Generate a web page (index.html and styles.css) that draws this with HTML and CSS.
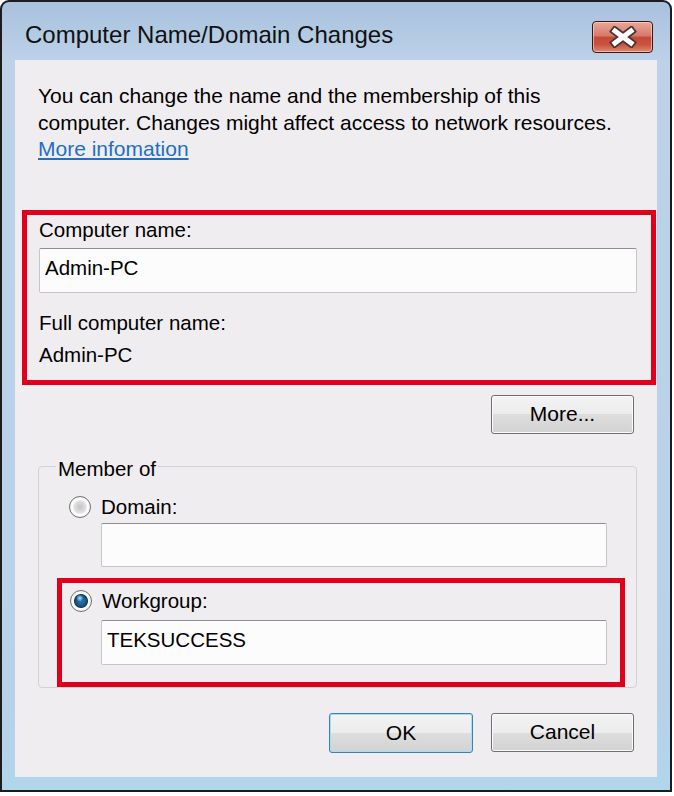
FILE: index.html
```html
<!DOCTYPE html>
<html lang="en">
<head>
    <meta charset="UTF-8">
    <meta name="viewport" content="width=device-width, initial-scale=1.0">
    <title>Computer Name/Domain Changes</title>
    <link rel="stylesheet" href="styles.css">
</head>
<body>
    <div class="window">
        <!-- title bar -->
        <div class="titlebar">
            <span class="title">Computer Name/Domain Changes</span>
            <button class="close" type="button" aria-label="Close">
                <svg width="28" height="22" viewBox="0 0 28 22">
                    <path d="M6 5 L22 17 M22 5 L6 17" stroke="#4b3434" stroke-width="8.5" stroke-linecap="square"/>
                    <path d="M6 5 L22 17 M22 5 L6 17" stroke="#ffffff" stroke-width="5" stroke-linecap="square"/>
                </svg>
            </button>
        </div>

        <div class="content">
            <p class="intro">
                You can change the name and the membership of this<br>
                computer. Changes might affect access to network resources.<br>
                <a href="#">More infomation</a>
            </p>

            <!-- computer name -->
            <div class="highlight name-box">
                <label class="label" for="computerName">Computer name:</label>
                <input class="textbox" id="computerName" type="text" value="Admin-PC">
                <div class="label full-label">Full computer name:</div>
                <div class="label full-value">Admin-PC</div>
            </div>

            <div class="more-row">
                <button class="btn" type="button">More...</button>
            </div>

            <!-- member of -->
            <fieldset class="group">
                <legend>Member of</legend>
                <label class="radio-row domain-row"><span class="radio"></span>Domain:</label>
                <input class="textbox domain-input" type="text">
                <div class="highlight workgroup-box">
                    <label class="radio-row"><span class="radio checked"></span>Workgroup:</label>
                    <input class="textbox workgroup-input" type="text" value="TEKSUCCESS">
                </div>
            </fieldset>

            <div class="actions">
                <button class="btn default" type="button">OK</button>
                <button class="btn" type="button">Cancel</button>
            </div>
        </div>
    </div>
</body>
</html>
```

FILE: styles.css
```css
body {
    margin: 0;
    background: #ffffff;
    font-family: "Liberation Sans", Arial, sans-serif;
    color: #000;
}
.window {
    width: 672px;
    box-sizing: border-box;
    border: 2px solid #1c1c1c;
    border-radius: 9px 9px 0 0;
    background: linear-gradient(#a8c1dd, #bdd2e9 60px, #b8d1e9 700px, #b0d6ec);
    padding: 0 13px 13px;
}
.titlebar {
    height: 58px;
    box-sizing: border-box;
    display: flex;
    justify-content: space-between;
    align-items: flex-start;
    padding: 19px 4px 0 10px;
}
.title {
    font-size: 24px;
    line-height: 28px;
    color: #111;
}
.close {
    width: 61px;
    height: 32px;
    padding: 0;
    border: 1px solid #3e1414;
    border-radius: 4px;
    background: linear-gradient(#eaa898, #d77a6a 45%, #c34a38 52%, #c9533f 75%, #dc8a70);
    box-shadow: inset 0 0 0 1px rgba(255, 220, 210, 0.6);
    display: flex;
    align-items: center;
    justify-content: center;
}
.content {
    background: #f0edf1;
    padding-bottom: 24px;
}
.intro {
    margin: 0;
    padding: 23px 23px 0;
    font-size: 21px;
    line-height: 26.5px;
}
.intro a {
    color: #1f6fc2;
    text-decoration: underline;
}
.highlight {
    border: 5px solid #e0001b;
    box-sizing: border-box;
}
.name-box {
    margin: 47px 1px 0 7px;
    padding: 3px 14px 13px 12px;
}
.label {
    display: block;
    font-size: 20.5px;
    line-height: 24px;
}
.textbox {
    display: block;
    box-sizing: border-box;
    height: 45px;
    width: 100%;
    margin: 6px 0 0;
    padding: 0 5px 4px;
    border: 1px solid #c6c6c6;
    border-top-color: #8e8e8e;
    border-radius: 2px;
    background: #fcfcfc;
    font-family: "Liberation Sans", Arial, sans-serif;
    font-size: 20.5px;
    color: #000;
}
.full-label {
    margin-top: 18px;
}
.full-value {
    margin-top: 8px;
}
.more-row {
    display: flex;
    justify-content: flex-end;
    padding-right: 23px;
    margin-top: 10px;
}
.btn {
    width: 143px;
    height: 39px;
    padding: 0;
    border: 1px solid #6f6f6f;
    border-radius: 3px;
    background: linear-gradient(#f3f3f3, #ececec 50%, #dedede 50%, #d2d2d2);
    box-shadow: inset 0 0 0 1px #fbfbfb;
    font-family: "Liberation Sans", Arial, sans-serif;
    font-size: 21px;
    color: #000;
}
.btn.default {
    width: 144px;
    height: 40px;
    border-color: #3c7fb1;
    box-shadow: inset 0 0 0 1px #a6def6;
}
.group {
    margin: 19px 20px 0 23px;
    padding: 0;
    border: 1px solid #d2d2d2;
    border-radius: 4px;
    min-width: 0;
}
.group legend {
    margin-left: 17px;
    padding: 4px 2px 0;
    font-size: 20.5px;
    line-height: 24px;
}
.radio-row {
    display: flex;
    align-items: center;
    gap: 10px;
    font-size: 20.5px;
    line-height: 24px;
}
.domain-row {
    margin-top: 14px;
    padding-left: 30px;
}
.radio {
    width: 22px;
    height: 22px;
    box-sizing: border-box;
    border-radius: 50%;
    border: 1px solid #707070;
    background: radial-gradient(circle at 50% 50%, #c4c4c4 0, #d6d6d6 4px, #e6e6e6 6.5px, #ffffff 7.5px, #f6f6f6 9.5px);
    flex: none;
}
.radio.checked {
    background:
        radial-gradient(circle at 44% 36%, #b6e2fa 0, #5d9ecf 2px, transparent 3.5px),
        radial-gradient(circle at 50% 50%, #2f78ae 0, #1d5b8a 4.5px, #113d60 6.5px, #ffffff 7.5px, #f6f6f6 9.5px);
}
.domain-input {
    width: 506px;
    height: 44px;
    margin: 4px 0 0 62px;
}
.workgroup-box {
    width: 568px;
    margin: 11px 0 0 18px;
    padding: 6px 0 17px 8px;
}
.workgroup-input {
    width: 506px;
    margin: 7px 0 0 31px;
}
.actions {
    display: flex;
    justify-content: flex-end;
    gap: 18px;
    margin-top: 25px;
    padding-right: 23px;
}
```
